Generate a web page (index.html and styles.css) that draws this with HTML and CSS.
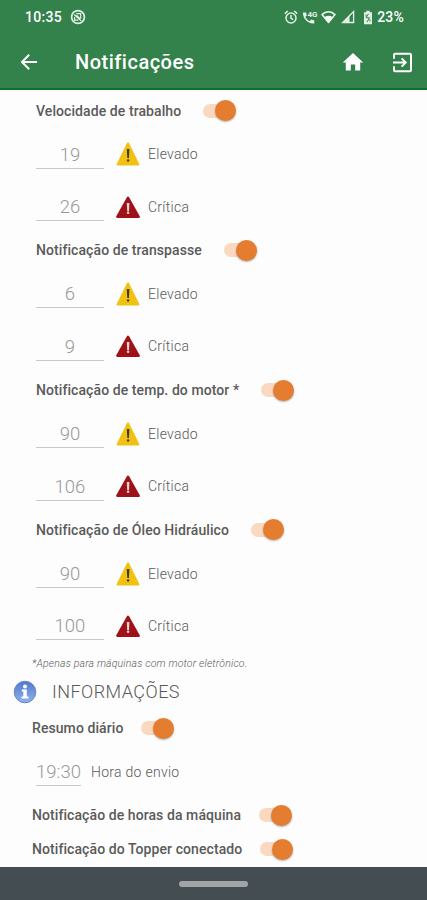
FILE: index.html
```
<!DOCTYPE html>
<html lang="pt-BR">
<head>
  <meta charset="UTF-8">
  <meta name="viewport" content="width=device-width, initial-scale=1.0">
  <title>Notificações</title>
  <link rel="stylesheet" href="styles.css">
</head>
<body>
  <!-- Ícones de alerta -->
  <svg class="sprite" width="0" height="0">
    <symbol id="warn-high" viewBox="0 0 24 24">
      <path d="M12 1.6 22.3 22.4H1.7Z" fill="#f2c112" stroke="#f2c112" stroke-width="2.2" stroke-linejoin="round"/>
      <path d="M10.8 7h2.6l-.5 9h-1.6z" fill="#3c3d1c"/>
      <circle cx="12.1" cy="18.4" r="1.2" fill="#3c3d1c"/>
    </symbol>
    <symbol id="warn-critical" viewBox="0 0 24 24">
      <path d="M12 2.6 22.8 21.8H1.2Z" fill="#9f1218" stroke="#9f1218" stroke-width="2.2" stroke-linejoin="round"/>
      <path d="M10.8 8h2.6l-.4 8h-1.8z" fill="#f0d6d6"/>
      <circle cx="12.1" cy="17.8" r="1.3" fill="#f0d6d6"/>
    </symbol>
  </svg>

  <!-- Cabeçalho -->
  <header>
    <div class="status-bar">
      <span class="clock">10:35</span>
      <svg class="status-app" width="16" height="16" viewBox="0 0 16 16" fill="none" stroke="#e4f0e6">
        <circle cx="8" cy="8" r="6.4" stroke-width="1.7"/>
        <path d="M4.2 5.5 11 11.8M6.3 4.6h4.4v4.6M4.6 8v3.2h3.6M6.5 6.2l4 4" stroke-width="1.2"/>
      </svg>
      <div class="status-icons">
        <svg width="14" height="15" viewBox="0 0 14 15" fill="none" stroke="#e4f0e6" stroke-width="1.5">
          <circle cx="7" cy="8" r="5"/>
          <path d="M.8 3.6 3.8 1M13.2 3.6 10.2 1M7 5v3.3l2.2 1.4"/>
        </svg>
        <svg class="call" width="16" height="15" viewBox="0 0 16 15">
          <path d="M1 2.5h3l.8 3-1.5 1.4c1.2 2 2.5 3.2 4.5 4.2l1.5-1.5 3 .8v3C6.5 14.5.5 8.5 1 2.5Z" fill="#e4f0e6"/>
          <text x="5.4" y="7" class="call-label">4G</text>
        </svg>
        <svg class="wifi" width="15" height="14" viewBox="0 0 15 14">
          <path d="M1 4.6C4.8.8 10.2.8 14 4.6L7.5 12.5Z" fill="none" stroke="#f2f8f3" stroke-width="1.5" stroke-linejoin="round"/>
          <path d="M3.5 6.9c2.6-1.4 5.4-1.4 8 0l-4 5.3Z" fill="#f2f8f3"/>
        </svg>
        <svg class="signal" width="14" height="14" viewBox="0 0 14 14">
          <path d="M12.6 1.5v11H1.6Z" fill="none" stroke="#e4f0e6" stroke-width="1.3"/>
          <path d="M8.5 5.5v7H1.5Z" fill="#e4f0e6"/>
        </svg>
        <svg class="battery" width="10" height="15" viewBox="0 0 10 15">
          <path d="M3.3.8h3.4v1.5H9v12H1v-12h2.3Z" fill="#e4f0e6"/>
          <path d="M5.5 3.8 3 7.8h3.5L4 12M3 4.5v2M7 9.5v2" fill="none" stroke="#33824c"/>
        </svg>
        <span class="battery-level">23%</span>
      </div>
    </div>
    <div class="toolbar">
      <svg class="back" width="18" height="18" viewBox="0 0 18 18" fill="none" stroke="#fff" stroke-width="2">
        <path d="M17 9H2.5M9.2 1.8 2 9l7.2 7.2"/>
      </svg>
      <h1>Notificações</h1>
      <svg class="home" width="22" height="20" viewBox="0 0 22 20">
        <path d="M11 1 .8 10.5h3v8h5v-6h4.4v6h5v-8h3Z" fill="#fff"/>
      </svg>
      <svg class="exit" width="21" height="21" viewBox="0 0 21 21" fill="none" stroke="#fff" stroke-width="2">
        <path d="M2 6.8V3q0-1.200 1.200-1.200h14.600q1.200 0 1.200 1.200v15q0 1.200-1.200 1.200H3.200Q2 19.200 2 18v-3.800"/>
        <path d="M1 10.5h12.300M9.600 6.400l4.100 4.100-4.100 4.100"/>
      </svg>
    </div>
  </header>

  <main>
    <!-- Alertas -->
    <section class="alert">
      <div class="alert-title"><h2>Velocidade de trabalho</h2><span class="switch"></span></div>
      <div class="level"><span class="value">19</span><svg class="warn"><use href="#warn-high"/></svg><span class="level-name">Elevado</span></div>
      <div class="level"><span class="value">26</span><svg class="warn"><use href="#warn-critical"/></svg><span class="level-name">Crítica</span></div>
    </section>
    <section class="alert">
      <div class="alert-title"><h2>Notificação de transpasse</h2><span class="switch"></span></div>
      <div class="level"><span class="value">6</span><svg class="warn"><use href="#warn-high"/></svg><span class="level-name">Elevado</span></div>
      <div class="level"><span class="value">9</span><svg class="warn"><use href="#warn-critical"/></svg><span class="level-name">Crítica</span></div>
    </section>
    <section class="alert">
      <div class="alert-title"><h2>Notificação de temp. do motor *</h2><span class="switch"></span></div>
      <div class="level"><span class="value">90</span><svg class="warn"><use href="#warn-high"/></svg><span class="level-name">Elevado</span></div>
      <div class="level"><span class="value">106</span><svg class="warn"><use href="#warn-critical"/></svg><span class="level-name">Crítica</span></div>
    </section>
    <section class="alert">
      <div class="alert-title"><h2>Notificação de Óleo Hidráulico</h2><span class="switch"></span></div>
      <div class="level"><span class="value">90</span><svg class="warn"><use href="#warn-high"/></svg><span class="level-name">Elevado</span></div>
      <div class="level"><span class="value">100</span><svg class="warn"><use href="#warn-critical"/></svg><span class="level-name">Crítica</span></div>
    </section>
    <p class="note">*Apenas para máquinas com motor eletrônico.</p>

    <!-- Informações -->
    <section class="info">
      <div class="info-heading">
        <svg width="24" height="24" viewBox="0 0 24 24">
          <defs>
            <linearGradient id="info-blue" x1="0" y1="0" x2="0" y2="1">
              <stop offset="0" stop-color="#4f78cc"/>
              <stop offset="1" stop-color="#8fb2f0"/>
            </linearGradient>
          </defs>
          <circle cx="12" cy="12" r="10.8" fill="url(#info-blue)" stroke="#6c86c4"/>
          <circle cx="12" cy="6.4" r="2" fill="#fff"/>
          <path d="M8.8 9.6h5v6.8h1.7v2H8.6v-2h1.7v-4.8H8.8Z" fill="#fff"/>
        </svg>
        <h2>INFORMAÇÕES</h2>
      </div>
      <div class="info-row"><h3>Resumo diário</h3><span class="switch"></span></div>
      <div class="send-time"><span class="value">19:30</span><span class="level-name">Hora do envio</span></div>
      <div class="info-row"><h3>Notificação de horas da máquina</h3><span class="switch"></span></div>
      <div class="info-row"><h3>Notificação do Topper conectado</h3><span class="switch"></span></div>
    </section>
  </main>

  <footer>
    <div class="handle"></div>
  </footer>
</body>
</html>
```
FILE: styles.css
```
* {
  box-sizing: border-box;
}
body {
  margin: 0;
  height: 900px;
  display: flex;
  flex-direction: column;
  overflow: hidden;
  font-family: Roboto, "Liberation Sans", sans-serif;
  background-color: #fdfdfd;
  color: #5a5a5a;
}
h1, h2, h3, p {
  margin: 0;
}
svg {
  flex: none;
}
.sprite {
  display: none;
}

/* Cabeçalho */
header {
  height: 90px;
  flex: none;
  background-color: #33824c;
  border-bottom: 2px solid #08722a;
  color: #fff;
}
.status-bar {
  height: 34px;
  padding: 0 23px 0 25px;
  display: flex;
  align-items: center;
}
.clock {
  font-size: 14px;
  font-weight: 500;
  letter-spacing: 0.3px;
  width: 45px;
}
.status-icons {
  margin-left: auto;
  display: flex;
  align-items: center;
}
.call {
  margin-left: 4px;
}
.call-label {
  font-size: 8px;
  font-weight: 700;
  fill: #e4f0e6;
}
.wifi {
  margin-left: 3px;
}
.signal {
  margin-left: 5px;
}
.battery {
  margin-left: 8px;
}
.battery-level {
  margin-left: 4px;
  font-size: 14px;
  font-weight: 500;
  letter-spacing: 0.2px;
}
.toolbar {
  height: 56px;
  padding: 0 14px 0 20px;
  display: flex;
  align-items: center;
}
.toolbar h1 {
  margin-left: 37px;
  font-size: 20px;
  font-weight: 500;
  letter-spacing: 0.5px;
}
.home {
  margin-left: auto;
}
.exit {
  margin-left: 28px;
}

/* Conteúdo */
main {
  height: 777px;
  flex: none;
  padding-top: 3px;
}
.alert {
  height: 139.8px;
  padding-left: 36px;
}
.alert-title {
  height: 35px;
  display: flex;
  align-items: center;
  gap: 22px;
}
.alert-title h2,
.info-row h3 {
  font-size: 14px;
  font-weight: 500;
  letter-spacing: 0.08px;
  white-space: nowrap;
}
.switch {
  width: 33px;
  height: 14px;
  border-radius: 7px;
  background-color: #fad9c0;
  display: flex;
  align-items: center;
  justify-content: flex-end;
}
.switch::after {
  content: "";
  width: 21px;
  height: 21px;
  flex: none;
  border-radius: 50%;
  background-color: #e47d30;
  box-shadow: 0 1px 2px rgba(0, 0, 0, 0.3);
}
.level {
  height: 52.4px;
  display: flex;
  align-items: center;
}
.value {
  width: 68px;
  height: 29px;
  line-height: 30px;
  border-bottom: 1px solid #c8c8c8;
  text-align: center;
  font-size: 18.5px;
  font-weight: 300;
  color: #999;
}
.warn {
  width: 24px;
  height: 24px;
  margin-left: 12px;
}
.level-name {
  margin-left: 8px;
  font-size: 14px;
  font-weight: 300;
  letter-spacing: 0.28px;
}
.note {
  height: 20px;
  padding-left: 32px;
  line-height: 23px;
  font-size: 10.5px;
  font-style: italic;
  font-weight: 300;
  letter-spacing: 0.17px;
}

/* Informações */
.info-heading {
  height: 39px;
  padding-left: 13px;
  display: flex;
  align-items: center;
  gap: 15px;
}
.info-heading h2 {
  font-size: 18px;
  font-weight: 300;
  letter-spacing: 0.45px;
}
.info-row {
  height: 34px;
  padding-left: 32px;
  display: flex;
  align-items: center;
  gap: 18px;
}
.send-time {
  height: 53px;
  padding-left: 36px;
  display: flex;
  align-items: center;
}
.send-time .value {
  width: 45px;
}
.send-time .level-name {
  margin-left: 10px;
}

/* Barra de navegação */
footer {
  height: 33px;
  flex: none;
  background-color: #434d52;
  display: flex;
  align-items: center;
  justify-content: center;
}
.handle {
  width: 69px;
  height: 6px;
  border-radius: 3px;
  background-color: #a2a5a7;
}
```
